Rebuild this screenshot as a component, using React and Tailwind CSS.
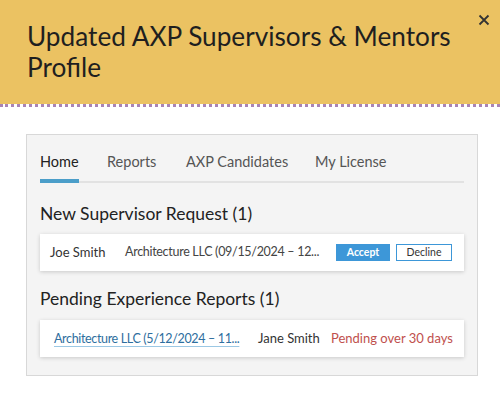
import React from "react";

export default function App() {
  return (
    <div className="w-[500px] h-[399px] bg-white overflow-hidden relative" style={{ fontFamily: "Lato, 'Open Sans', sans-serif" }}>
      <div className="h-[104px] bg-[#ebc262] pl-[27px] pt-[21px] relative">
        <h1 className="text-[26.2px] leading-[31px] text-[#1f1f1f] font-normal whitespace-nowrap">
          Updated AXP Supervisors &amp; Mentors
          <br />
          Profile
        </h1>
        <svg className="absolute left-[478px] top-[14px]" width="12" height="12" viewBox="0 0 12 12">
          <path d="M1.5 1.5 L10.5 10.5 M10.5 1.5 L1.5 10.5" stroke="#333" strokeWidth="1.8" />
        </svg>
      </div>
      <div className="h-[3px] border-t-[3px] border-dotted border-[#a984b5]" />
      <div className="mt-[27px] mx-[26px] w-[452px] h-[242px] bg-[#f4f4f4] border border-[#d8d8d8] px-[13px] pt-[17px]">
        <div className="flex text-[14.5px] leading-[20px] text-[#555] border-b-[2px] border-[#e2e2e2] h-[31px] whitespace-nowrap">
          <div className="text-[#222] w-[67px] relative">
            Home
            <div className="absolute left-0 top-[27px] w-[39px] h-[4px] bg-[#4b9ec9]" />
          </div>
          <div className="w-[79px]">Reports</div>
          <div className="w-[129px]">AXP Candidates</div>
          <div>My License</div>
        </div>
        <div className="text-[17.5px] leading-[22px] text-[#222] mt-[20px] whitespace-nowrap">New Supervisor Request (1)</div>
        <div className="mt-[9px] h-[37px] bg-white shadow-[0_1px_4px_rgba(0,0,0,0.18)] flex items-center pl-[10px] pr-[10px] text-[13px] text-[#333] whitespace-nowrap">
          <div className="w-[75px] shrink-0">Joe Smith</div>
          <div className="w-[211px] shrink-0 text-[#444] text-[12.5px] tracking-[-0.3px]">Architecture LLC (09/15/2024 – 12...</div>
          <div className="w-[54px] h-[17px] shrink-0 bg-[#3d97d8] text-white text-[10.5px] font-bold flex items-center justify-center">Accept</div>
          <div className="ml-[6px] w-[56px] h-[17px] shrink-0 border border-[#3d97d8] text-[#333] text-[10.5px] flex items-center justify-center">Decline</div>
        </div>
        <div className="text-[17.5px] leading-[22px] text-[#222] mt-[17px] whitespace-nowrap">Pending Experience Reports (1)</div>
        <div className="mt-[10px] h-[37px] bg-white shadow-[0_1px_4px_rgba(0,0,0,0.18)] flex items-center pl-[14px] text-[13px] whitespace-nowrap">
          <div className="w-[204px] shrink-0">
            <span className="text-[#2e6e9e] text-[12.5px] tracking-[-0.35px] underline decoration-[#9cc8e4] underline-offset-[3px]">Architecture LLC (5/12/2024 – 11...</span>
          </div>
          <div className="w-[73px] shrink-0 text-[#333]">Jane Smith</div>
          <div className="text-[#c0504d]">Pending over 30 days</div>
        </div>
      </div>
    </div>
  );
}
